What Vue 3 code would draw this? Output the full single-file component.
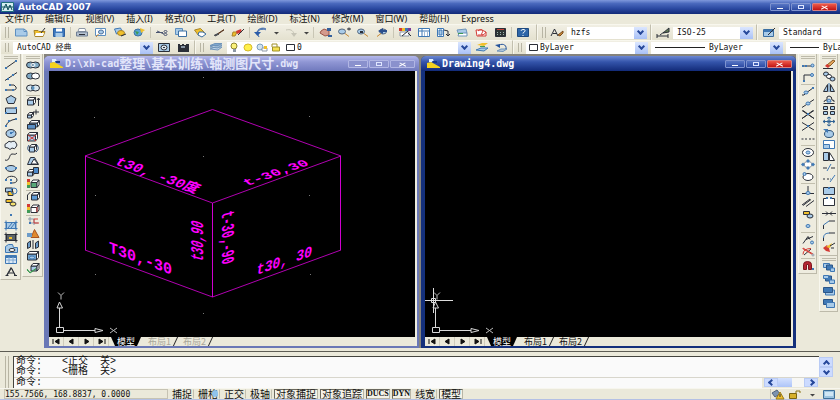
<script setup>
import { h } from 'vue'

const K = '#2b2f38'
const B = '#3f78b4'
const L = '#a9cbe8'
const W = '#ffffff'
const Y = '#f0c02c'
const R = '#d23a34'
const G = '#3f9a55'
const S = '#8d98a6'
const O = '#c98a35'
const N = 'none'

const box = (x, y, w, hh) => `M${x} ${y}h${w}v${hh}h${-w}z`
const oval = (x, y, rx, ry) => `M${x - rx} ${y}a${rx} ${ry} 0 1 0 ${rx * 2} 0a${rx} ${ry} 0 1 0 ${-rx * 2} 0z`
const dots = (...p) => [B, N, p.map(([x, y]) => box(x - 1, y - 1, 2, 2)).join('')]
const cube = (x, y, w, d, fill = L) => [
  [fill, K, `M${x} ${y + 3}h${w}v${d}h${-w}z`],
  [W, K, `M${x} ${y + 3}l2 -2.5h${w}l-2 2.5zM${x + w} ${y + 3}l2 -2.5v${d}l-2 2.5z`]
]

// Each icon is a list of [fill, stroke, path] on a 14 x 11 grid
const icons = {
  new: [[L, '#5d8fc0', 'M1.5 2h8.500l3 2.500v4.500h-11.500z'], [W, '#5d8fc0', 'M10 2l3 2.500h-3z']],
  open: [[Y, '#a8842a', 'M1 3.500h4l1 1h6l-2 5h-8z'], [W, N, 'M3 6h8l-1 3h-8z'], [N, K, 'M8 6l4 -5']],
  save: [['#3d78bd', '#2d5f9f', box(1.5, 1.5, 11, 8)], [W, N, box(4, 1.5, 6, 3)], [L, N, box(3.5, 6, 7, 4)]],
  print: [[W, S, 'M4 1.500h6l1 3h-8z'], ['#b6c2d0', '#6f7f94', 'M1.500 5h11v4h-11z'], [K, N, box(4, 7, 6, 1)]],
  preview: [[W, '#5d8fc0', 'M1.500 1.500h10v7h-10z'], [L, '#4a6f9c', oval(7, 5, 2.5, 2)], [N, O, 'M4.500 7l-2.500 3']],
  publish: [[L, B, 'M1.500 2l6 -1 2 4 -6 2z'], [Y, '#a8842a', oval(8, 6, 3.5, 2.5)], [N, K, 'M8 9l5 -2']],
  dwf: [['#57a3d8', '#3b6fa2', oval(6, 5.5, 4, 3.5)], [Y, N, 'M8 1l5 2 -4 3z'], [G, N, 'M3 4l4 1 -2 3z']],
  cut: [[N, '#4b5570', 'M1 5.500h7M2 4l7 3M9 4.500a1.500 1 0 1 1 3 0a1.500 1 0 1 1 -3 0M9 7.500a1.500 1 0 1 1 3 0a1.500 1 0 1 1 -3 0']],
  copy: [[L, '#5d8fc0', box(1.5, 1.5, 7, 6)], [W, '#3b6fa2', box(4.5, 4, 8, 5.5)]],
  paste: [[Y, '#a8842a', 'M1.500 3l6 -1.500 4 4 -6 3z'], [W, '#3b6fa2', 'M6 5h4l3 2 -4 3 -4 -2z']],
  match: [[N, K, 'M2 8.500l4 -2M3 9l4 -2'], [N, '#5b3922', 'M6 6.500l6 -4M6 7l6 -4']],
  block: [[Y, '#a8842a', 'M2 5h4l-2 4h-3z'], [R, N, 'M5 4l5 -2 1 3 -5 2z'], [N, K, 'M7 8l6 -6']],
  undo: [[N, '#2a5ba8', 'M3 6c2 -5 8 -4 9 -3M3 5c2 -5 8 -4 9 -3M3 6c1 1 1 2 2 4'], ['#2a5ba8', N, 'M0 5h7l-3.500 4z']],
  redo: [[N, '#c6c4b6', 'M2 3c4 -1 7 0 8 4'], ['#c6c4b6', N, 'M7 6h6l-3 4z']],
  caret: [['#444444', N, 'M5 5h5l-2.500 2.500z']],
  pan: [['#d59a8d', '#9a5548', 'M3 4l3 -2 5 2v4l-4 1 -5 -3z'], ['#35609c', N, 'M9 1h4v3h-4zM10 8h4v2h-4z']],
  zoomrt: [[L, '#54677e', oval(5, 4.5, 3.5, 2.5)], [N, O, 'M8 6.500l4 3'], [N, K, 'M10 2h4M12 0.500v3']],
  zoomwin: [[L, '#54677e', oval(5, 4.5, 3.5, 2.5)], [N, O, 'M8 6.500l4 3'], [K, N, box(4, 4, 3, 2)]],
  zoomprev: [[L, '#54677e', oval(8, 4.5, 3.5, 2.5)], [N, O, 'M6 6.500l-4 3'], ['#2a4e8c', N, 'M3 4l5 -3v2h4v2h-4v2z']],
  props: [[R, N, box(1, 1, 3, 3)], [Y, N, box(4, 1, 3, 3)], [B, N, box(7, 1, 3, 3)], ['#7a3b9a', N, box(10, 1, 3, 3)], [W, S, 'M2 5h9v4h-9z'], [N, K, 'M4 9l6 -5M10 6l3 3']],
  center: [[W, B, box(1.5, 1.5, 11, 8)], [N, B, 'M5 1v9M1 4h12M7 6h1M10 6h1M7 8h1M10 8h1']],
  palette: [[W, B, 'M1.500 1.500h6v8h-6z'], [L, B, 'M3 3h3v5h-3z'], [N, K, 'M8 3l4 1v5M10 7l2 2 2 -2']],
  sheet: [[L, '#6f94ba', 'M2 3l9 -1 1 4 -8 2z'], [W, '#6f94ba', 'M4 6h8v3h-9z'], [G, N, box(3, 6, 5, 1)]],
  markup: [[W, R, 'M2 3h6l4 2v4h-9z'], [N, R, 'M4 4c3 -3 6 -1 4 2s3 2 4 -1M4 8h5']],
  calc: [['#2c3433', K, box(2.5, 1.5, 10, 8)], ['#c4413b', N, box(4, 2, 7, 1)], [N, '#9db2ae', 'M4 5.500h1M7 5.500h1M10 5.500h1M4 7.500h1M7 7.500h1M10 7.500h1']],
  help: [['#2f66a8', '#1f4a80', box(1.5, 1.5, 11, 8)], [N, W, 'M5 4c0 -2 5 -2 4 0c0 1 -2 1 -2 2.500M7 8v1']],
  style: [[N, K, 'M1 9l3.500 -7 3.500 7M3 6.500h4'], [O, '#7a4a1f', 'M8 8l5 -4v2l-3 3z']],
  dim: [[N, K, 'M1 9h11M1 7v4M12 7v4M4 8l4 -3'], ['#5f7a55', K, 'M7 6l6 -5v4z']],
  tbl: [[L, '#3b6fa2', box(1.5, 2.5, 10, 7)], [B, N, box(2, 3, 9, 2)], [N, K, 'M6 8l7 -7']],
  gear: [[L, K, box(1.5, 1.5, 11, 8)], ['#dde6ee', K, oval(7, 5.5, 3, 2.5)], [K, N, box(6, 5, 2, 1)]],
  space: [[K, N, 'M2 2h2v1h2v-1h2v1h2v-1h3v8h-11z'], ['#8896a6', N, box(5, 4, 4, 2)]],
  layers: [['#c3d7ea', '#6f94ba', 'M1 7l5 -2h7l-4 3zM1 5l5 -2h7l-4 3z'], ['#7da7d0', '#6f94ba', 'M1 3.500l5 -2h7l-4 2z']],
  layercur: [[Y, N, 'M2 3l5 -2h6l-4 3z'], [L, B, 'M1 8l5 -2h7l-4 3z'], [G, N, box(5, 4, 5, 1)]],
  layerprev: [['#b5c9de', '#6f94ba', 'M3 9l4 -2h6l-4 2.500z'], [N, '#23529b', 'M12 7c1 -5 -5 -6 -8 -3'], ['#23529b', N, 'M1 3l5 -1v4z']],
  bulb: [['#fbf27a', '#8d8430', oval(7, 4, 3, 3)], [S, N, box(6, 7, 3, 3)]],
  sun: [['#fff04a', '#d6b928', oval(7, 5.5, 4, 3.5)]],
  freeze: [['#cfe1ef', '#7ba0c0', oval(5, 5, 3, 3)], [W, S, 'M7 6h5v3h-5z'], [Y, N, box(9, 4, 3, 3)]],
  lock: [[N, '#a0912b', 'M3 5v-3h5v3'], ['#f4e153', '#a0912b', box(3.5, 5, 7, 4)]],
  swatch: [[W, K, box(3.5, 2.5, 8, 6)]],

  line: [[N, K, 'M2 9L12 2'], dots([2, 9], [12, 2])],
  xline: [[N, K, 'M1 9.500L13 1.500'], dots([4, 8], [9, 4])],
  pline: [[N, K, 'M2 8h7q4 0 3 -3t-6 -2'], dots([2, 8], [6, 3], [9, 8])],
  polygon: [[L, K, 'M7 1.500l5 3 -2 5h-6l-2 -5z']],
  rect: [[L, K, box(1.5, 3, 11, 5.5)], dots([12, 3], [2, 8])],
  arc: [[N, K, 'M2 9.500q1 -6 10 -7.500'], dots([2, 9], [5, 4], [12, 2])],
  circle: [[L, K, oval(7, 5.5, 5, 4)], [N, B, 'M7 5.500l3 -2'], dots([7, 5])],
  cloud: [['#e3edf5', K, 'M3 3q2 -3 4 -1q4 -2 5 1q2 2 0 4q-1 3 -4 1q-2 3 -4 0q-4 0 -3 -2q-1 -2 2 -3z']],
  spline: [[N, K, 'M1 9c5 2 4 -6 7 -6s3 1 5 -1']],
  ellipse: [[L, K, oval(7, 5.5, 5, 3)], dots([2, 5], [12, 5])],
  earc: [[N, K, 'M2 6c0 -5 11 -5 11 0c0 3 -4 3 -6 3'], dots([2, 6], [7, 9], [7, 6])],
  insert: [[L, K, 'M1.500 2h7v4h-7z'], [Y, K, 'M4 5.500h5v4h-5z'], [N, B, oval(10, 5, 3, 3)]],
  mkblock: [[Y, K, 'M2 2.500h6v3h-6z'], ['#f3e06e', K, oval(9, 7, 3, 2)]],
  point: [dots([7, 6])],
  hatch: [[L, B, box(2.5, 2.5, 9, 6)], [N, B, 'M2 0.500v10M12 0.500v10M0.500 2.500h13M0.500 8.500h13M4 8l4 -5M7 8l4 -5']],
  gradient: [['#5d6468', K, box(2.5, 2.5, 9, 6)], [N, K, 'M2 0.500v10M12 0.500v10M0.500 2.500h13M0.500 8.500h13'], [Y, N, box(5, 5, 3, 2)]],
  region: [[L, B, 'M1.500 9.500v-6l3 -2h4l1 3h4v5z'], [W, K, oval(8, 7, 3, 1.5)]],
  table: [['#dce9f6', B, box(1.5, 1.5, 11, 8)], [B, N, box(2, 2, 10, 2)], [N, '#7ea8d2', 'M2 6h10M5 3v6M9 3v6']],
  text: [[N, K, 'M2.500 9.500L7 1.500L11.500 9.500M4.500 7h5M1.500 9.500h3M10 9.500h3'], [N, K, 'M3 9.500L7.500 2L11 9.500']],

  union: [['#7fa9c4', K, oval(4.500, 5, 4, 3)], ['#7fa9c4', K, oval(9.500, 5, 4, 3)], [N, W, oval(7, 5, 2, 1.5)]],
  subtract: [['#7fa9c4', K, oval(4.500, 5, 4, 3)], [W, K, oval(9.500, 5, 4, 3)]],
  intersect: [['#dce9f0', K, oval(4.500, 5, 4, 3)], ['#dce9f0', K, oval(9.500, 5, 4, 3)], ['#5b93bd', N, oval(7, 5, 1.5, 2)]],
  extrude: [...cube(1.5, 1, 6, 5), [N, K, 'M12.500 10v-8M11 4l1.500 -2 1.500 2']],
  move3: [...cube(1.5, 4, 4, 3), [N, K, 'M7 4h6M10 1.500v5']],
  offset3: [...cube(3.5, 0, 8, 4, '#7fb0dd'), ['#5b8fc4', K, box(1.500, 4.5, 8, 4.5)]],
  delface: [...cube(1.5, 1, 8, 6), [N, R, 'M2 4l8 6M10 4l-8 6']],
  rotface: [...cube(3.5, 1, 5, 5), [N, '#31527f', 'M3 2q-3 4 1 7M11 2q3 4 -1 7']],
  taper: [[L, K, 'M1.500 9.500l3 -7h4l4 7z'], [W, K, 'M5 9l3 -5 4 5z']],
  copyface: [...cube(1.5, 3, 5, 4), ['#4f8bc9', K, box(7.5, 1.500, 5, 6)]],
  colface: [[R, N, box(1, 1, 3, 3)], [Y, N, box(1, 4, 3, 3)], [G, N, box(1, 7, 3, 3)], ...cube(5, 1.5, 6, 5, '#57a878')],
  copyedge: [...cube(5.5, 1, 6, 5, '#5f9bd4'), [N, K, 'M1.500 9v-5l3 -3']],
  coledge: [[R, N, box(1, 1, 3, 3)], [Y, N, box(1, 4, 3, 3)], [G, N, box(1, 7, 3, 3)], ...cube(5, 1.5, 6, 5, W), [N, R, 'M11 4v5']],
  imprint: [[N, S, 'M2 3h6v6M4 1v6h8'], [N, R, 'M12 3h-4v4h5'], dots([4, 7])],
  clean: [['#e08a2e', '#a8541f', 'M5 9.500l3.500 -8 4.500 8z'], ['#6d9cc9', N, box(1, 5, 5, 4)]],
  separate: [['#6d9cc9', K, 'M1.500 4l3 -2v6l-3 1.500z'], ['#6d9cc9', K, 'M9.500 4l3 -2v6l-3 1.500z'], [N, K, 'M7 1v9']],
  shell: [...cube(1.5, 0, 9, 6, '#6fa3cf'), [L, B, oval(6, 6.5, 2.5, 1.5)]],
  check: [...cube(5, 0, 6, 5), [N, G, 'M1 6l3 3.500 6 -4'], [N, G, 'M1 7l3 3 6 -4']],

  temp: [[N, K, 'M1 6h10'], dots([2, 6], [5, 6], [12, 6]), [L, B, oval(11.5, 5.5, 1.5, 1.5)]],
  from: [[N, K, 'M3 9v-6h9'], dots([3, 9]), [L, B, oval(11, 3, 1.5, 1.5)]],
  endp: [[N, K, 'M1 9q2 1 4 -2l7 -5'], [L, B, oval(5, 6.5, 2, 1.5)], dots([12, 2])],
  midp: [[N, K, 'M1 9.500L13 1.500'], [L, B, oval(7, 5.5, 2, 1.5)]],
  inter: [[N, K, 'M1 1.500l12 8M13 1.500l-12 8M2 1.500l11 8M12 1.500l-11 8'], dots([7, 5])],
  appint: [[N, K, 'M1 1.500l5 3M13 1.500l-12 8M8 6l5 3'], dots([7, 5])],
  ext: [[N, K, 'M0.500 6h2M4 6h2M8 6h2M11.500 6h2']],
  cen: [[W, K, oval(7, 5.5, 5.5, 4)], [L, B, oval(7, 5.5, 2, 1.5)]],
  quad: [[W, S, oval(7, 5.5, 4, 3)], [B, N, 'M7 0l2 2 -2 2 -2 -2zM7 7l2 2 -2 2 -2 -2zM2 3.500l2 2 -2 2 -2 -2zM12 3.500l2 2 -2 2 -2 -2z']],
  tan: [[W, K, oval(7, 6, 5, 3.5)], [L, B, oval(3.5, 3, 1.5, 1.5)]],
  perp: [[N, K, 'M1 8.500h12M7 1v7'], [L, B, oval(7, 8, 2, 1.5)]],
  para: [[N, K, 'M1 8l8 -6M5 9.500l8 -6M2 8.500l8 -6']],
  insp: [[Y, K, box(2.5, 2.5, 6, 3)], [L, K, oval(9, 7, 3, 2)]],
  node: [[L, B, oval(7, 6, 2, 1.5)]],
  near: [[N, K, 'M2 9.500l5 -7 2 3M5 5.500l7 -3'], [L, B, oval(11, 8.5, 1.5, 1.5)]],
  nosnap: [[N, K, 'M3 9l7 -6'], [N, R, 'M1.500 2.500l10 6M2 2l10 6M2 8.500q0 -6 8 -6'], [W, S, oval(12, 9, 1, 1)]],
  osnap: [['#b52430', '#7d1620', 'M2.500 9.500v-5q0 -3 4 -3t4 3v5h-3v-5h-2v5z'], dots([12, 9])],

  erase: [['#e2a45a', '#8a5a26', 'M5 6l6 -5 2 1 -5 5z'], [R, N, 'M3 7l2 -2 3 2 -2 2z'], [N, K, 'M1 9.500h10']],
  copy2: [[L, K, oval(4, 3, 2.5, 2)], [W, K, oval(7, 5.500, 2.5, 2)], [L, K, oval(10.500, 8, 2.5, 2)]],
  mirror: [[L, K, 'M1.500 9.500l4 -7v7zM12.500 9.500l-4 -7v7z'], [N, B, 'M7 1v9']],
  offset: [[N, K, 'M1.500 9.500h11M2 8q0 -2 3 -2q-1 -4 2 -4t3 4q3 0 2 2'], [L, B, 'M5 8q0 -3 2 -3t2 3z']],
  array: [[L, K, box(1.5, 1.5, 4, 3) + box(8.5, 1.5, 4, 3) + box(1.5, 6.5, 4, 3) + box(8.5, 6.5, 4, 3)]],
  move: [[N, '#2f6294', 'M1 5.500h12M7 1v9M3 4l-2 1.500 2 1.500M11 4l2 1.500 -2 1.500M5 2.500l2 -1.500 2 1.500M5 8.500l2 1.500 2 -1.500'], ['#2f6294', N, box(5, 4.5, 4, 2)]],
  rotate: [[L, '#2f5478', oval(7, 6, 4.5, 3.5)], [B, N, 'M1 1h5v4z']],
  scale: [[W, B, box(1.5, 1.5, 11, 8)], [L, B, box(1.5, 5.5, 6, 4)]],
  stretch: [[L, K, 'M1.500 1.500h5v8h-5z'], [W, K, 'M7.500 9.500v-8l5 8z']],
  trim: [[N, K, 'M1 6h4M9 6h4'], [N, B, 'M5 9l4 -7']],
  extend: [[N, K, 'M1 6h2M5 6h2'], [N, B, 'M8 6h1M8 9l5 -7']],
  breakpt: [[L, K, box(1.5, 2.5, 11, 7)], dots([7, 3])],
  brk: [[W, K, 'M5 2.500h-3.500v7h11v-7h-3.500'], dots([5, 2], [9, 2])],
  join: [[N, K, 'M0 5.500h14M4 3.500l2 2 -2 2M10 3.500l-2 2 2 2']],
  chamfer: [[N, K, 'M1.500 10v-4M7 2h6'], [N, B, 'M1.500 6l5.500 -4']],
  fillet: [[N, K, 'M1.500 10v-4M7 2h6'], [N, B, 'M1.500 7q0 -5 6 -5']],
  explode: [[R, N, 'M1 6l4 -3 2 3 1 4 -4 -1z'], [Y, N, 'M4 5l6 -4 -2 5z'], [N, K, 'M8 4l5 -3M9 6h3']],
  front: [[L, B, box(1.5, 1.5, 6, 4)], ['#3f78b4', '#2c5688', box(4.5, 3, 6, 5)], [L, B, box(8.5, 6, 4, 3.5)]],
  back: [['#3f78b4', '#2c5688', box(3.5, 2, 6, 5)], [L, B, box(1.5, 1.5, 5, 3) + box(7.5, 6, 5, 3.5)]],
  above: [[L, B, box(3.5, 4, 9, 5)], ['#3f78b4', '#2c5688', box(1.5, 1.5, 9, 5)]],
  under: [['#3f78b4', '#2c5688', box(1.5, 1.5, 9, 5)], [L, B, box(4.5, 4.5, 8, 5)]],

  app: [['#d5eef0', '#1f6f7c', box(0.500, 0.500, 12, 9)], [N, '#12505c', 'M2 8l3 -6 2 6 2 -5 2 5M1 5h11']],
  doc: [['#f4d21e', N, 'M1 10v-5l4 -1 9 5v1z'], ['#dff0ff', N, 'M3 1h4l1 3h-5z'], ['#173a8a', N, 'M6 3h5v2h-4z']],
  warn: [['#7c93b0', '#51637c', 'M1 4l5 -3 3 4 -5 3z'], [Y, '#9a7a14', 'M5 10l4 -7 4 7z'], [K, N, box(8.5, 5, 1, 3)]],
  unlock: [[N, '#8c7414', 'M8 4v-2h4v2'], ['#d6b02a', '#7a6410', box(1.5, 4.5, 7, 5)]],
  screen: [['#9cc4e0', '#3c6f9a', box(1.5, 1.5, 11, 8)], ['#cfe6f5', N, box(3, 3, 8, 4)]]
}

const Glyph = (props) =>
  h('svg', { class: 'glyph', viewBox: '0 0 14 11', width: 14, height: 11, 'aria-hidden': 'true' },
    (icons[props.name] || []).map(([fill, stroke, d]) => h('path', { fill, stroke, d })))
Glyph.props = ['name']

const menus = ['文件(F)', '编辑(E)', '视图(V)', '插入(I)', '格式(O)', '工具(T)', '绘图(D)', '标注(N)', '修改(M)', '窗口(W)', '帮助(H)', 'Express']

const standard = [
  ['new', 'open', 'save'],
  ['print', 'preview', 'publish', 'dwf'],
  ['cut', 'copy', 'paste', 'match', 'block'],
  ['undo', 'caret', 'redo', 'caret'],
  ['pan', 'zoomrt', 'zoomwin', 'zoomprev'],
  ['props', 'center', 'palette', 'sheet', 'markup', 'calc'],
  ['help']
]

const draw = [['line', 'xline', 'pline', 'polygon', 'rect', 'arc', 'circle', 'cloud', 'spline', 'ellipse', 'earc', 'insert', 'mkblock', 'point', 'hatch', 'gradient', 'region', 'table', 'text']]
const solids = [
  ['union', 'subtract', 'intersect'],
  ['extrude', 'move3', 'offset3', 'delface', 'rotface', 'taper', 'copyface', 'colface'],
  ['copyedge', 'coledge'],
  ['imprint', 'clean', 'separate', 'shell', 'check']
]
const snaps = [
  ['temp', 'from'],
  ['endp', 'midp', 'inter', 'appint', 'ext'],
  ['cen', 'quad', 'tan'],
  ['perp', 'para', 'insp', 'node'],
  ['near', 'nosnap'],
  ['osnap']
]
const modify = [['erase', 'copy2', 'mirror', 'offset', 'array', 'move', 'rotate', 'scale', 'stretch', 'trim', 'extend', 'breakpt', 'brk', 'join', 'chamfer', 'fillet', 'explode']]
const order = [['front', 'back', 'above', 'under']]

const leftBars = [
  [{ id: 'draw', groups: draw }],
  [{ id: 'solids', groups: solids }]
]
const rightBars = [
  [{ id: 'snaps', groups: snaps }],
  [{ id: 'modify', groups: modify }, { id: 'order', groups: order }]
]

const docs = [
  { id: 'iso', active: false, title: ['D:\\xh-cad', '整理', '\\', '基本训练', '\\', '轴测图尺寸', '.dwg'] },
  { id: 'blank', active: true, title: ['Drawing4.dwg'] }
]
const isCjk = (s) => /[\u4e00-\u9fff]/.test(s)

const gridDots = [[154, 6], [45, 46], [260, 45], [154, 85], [46, 124], [260, 124], [46, 203], [261, 203], [154, 242]]

const labels = [
  { text: 't30, -30度', m: 'matrix(0.94 0.34 -0.6 0.74 65 93)' },
  { text: 't-30,30', m: 'matrix(1 -0.34 0.58 0.56 198 115)' },
  { text: 't30,90', m: 'matrix(0 -0.73 1.2 0.36 154 191)' },
  { text: 't-30,-90', m: 'matrix(0 0.73 -1.2 0.36 173 142)' },
  { text: 'T30,-30', m: 'matrix(1 0.36 0 1.05 60 181)' },
  { text: 't30, 30', m: 'matrix(0.88 -0.3 -0.15 1.05 207 204)' }
]

const navs = [
  { id: 'first', d: 'M4 2v5M10 2v5l-4 -2.500z' },
  { id: 'prev', d: 'M9 2v5l-4 -2.500z' },
  { id: 'next', d: 'M6 2v5l4 -2.500z' },
  { id: 'last', d: 'M5 2v5l4 -2.500zM11 2v5' }
]

const modes = [
  { label: '捕捉' }, { label: '栅格', busy: true }, { label: '正交' }, { label: '极轴' },
  { label: '对象捕捉', on: true }, { label: '对象追踪', on: true },
  { label: 'DUCS', on: true, latin: true }, { label: 'DYN', on: true, latin: true },
  { label: '线宽' }, { label: '模型', on: true }
]
</script>

<template>
  <div class="app">
    <header class="titlebar">
      <Glyph name="app" />
      <h1>AutoCAD 2007</h1>
      <div class="wincontrols main-controls">
        <button class="min" aria-label="最小化"></button>
        <button class="max" aria-label="还原"></button>
        <button class="close" aria-label="关闭"></button>
      </div>
    </header>

    <nav class="menubar">
      <a v-for="m in menus" :key="m" href="#">{{ m }}</a>
    </nav>

    <div class="toolrow">
      <section class="bar standard">
        <i class="grip"></i>
        <div v-for="(g, i) in standard" :key="i" class="group">
          <button v-for="(n, j) in g" :key="j" class="tool" :class="{ narrow: n === 'caret' }" :aria-label="n"><Glyph :name="n" /></button>
        </div>
      </section>
      <section class="bar">
        <i class="grip"></i>
        <button class="tool" aria-label="文字样式"><Glyph name="style" /></button>
        <label class="combo style-combo"><select aria-label="文字样式"><option>hzfs</option></select><i class="arrow"></i></label>
      </section>
      <section class="bar">
        <button class="tool" aria-label="标注样式"><Glyph name="dim" /></button>
        <label class="combo style-combo"><select aria-label="标注样式"><option>ISO-25</option></select><i class="arrow"></i></label>
      </section>
      <section class="bar">
        <button class="tool" aria-label="表格样式"><Glyph name="tbl" /></button>
        <label class="combo style-combo"><select aria-label="表格样式"><option>Standard</option></select><i class="arrow"></i></label>
      </section>
    </div>

    <div class="toolrow second">
      <section class="bar">
        <i class="grip"></i>
        <label class="combo workspace"><select aria-label="工作空间"><option>AutoCAD 经典</option></select><i class="arrow"></i></label>
        <button class="tool" aria-label="工作空间设置"><Glyph name="gear" /></button>
        <button class="tool" aria-label="我的工作空间"><Glyph name="space" /></button>
      </section>
      <section class="bar">
        <i class="grip"></i>
        <button class="tool" aria-label="图层"><Glyph name="layers" /></button>
        <label class="combo layer">
          <Glyph name="bulb" /><Glyph name="sun" /><Glyph name="freeze" /><Glyph name="lock" /><Glyph name="swatch" />
          <select aria-label="当前图层"><option>0</option></select><i class="arrow"></i>
        </label>
        <button class="tool" aria-label="置为当前"><Glyph name="layercur" /></button>
        <button class="tool" aria-label="上一个图层"><Glyph name="layerprev" /></button>
      </section>
      <section class="bar">
        <i class="grip"></i>
        <label class="combo color"><Glyph name="swatch" /><select aria-label="颜色"><option>ByLayer</option></select><i class="arrow"></i></label>
        <label class="combo ltype"><i class="sample"></i><select aria-label="线型"><option>ByLayer</option></select><i class="arrow"></i></label>
        <label class="combo weight"><i class="sample short"></i><select aria-label="线宽"><option>ByLayer</option></select><i class="arrow"></i></label>
      </section>
    </div>

    <main class="work">
      <div class="dock">
        <div v-for="(col, i) in leftBars" :key="i" class="dockcol">
          <section v-for="b in col" :key="b.id" class="vbar" :class="b.id">
            <i class="hgrip"></i>
            <template v-for="(g, j) in b.groups" :key="j">
              <i v-if="j" class="rule"></i>
              <button v-for="n in g" :key="n" class="tool" :aria-label="n"><Glyph :name="n" /></button>
            </template>
          </section>
        </div>
      </div>

      <div class="mdi">
        <article v-for="d in docs" :key="d.id" class="doc" :class="{ active: d.active }">
          <header class="doctitle">
            <Glyph name="doc" />
            <h2><span v-for="(t, i) in d.title" :key="i" :class="{ cjk: isCjk(t) }">{{ t }}</span></h2>
            <div class="wincontrols">
              <button class="min" aria-label="最小化"></button>
              <button class="max" aria-label="最大化"></button>
              <button class="close" aria-label="关闭"></button>
            </div>
          </header>
          <div class="client">
            <svg class="canvas" width="100%" height="100%">
              <g v-if="d.id === 'iso'">
                <rect v-for="(p, i) in gridDots" :key="i" :x="p[0]" :y="p[1]" width="1" height="1" fill="#777777" />
                <g fill="none" stroke="#b000b0">
                  <path d="M36 85L163.500 38.500L292 85L163.500 132z" />
                  <path d="M36 179L163.500 226L292 179" />
                  <path d="M36.500 85V179M163.500 132V226M291.500 85V179" stroke="#d000d0" />
                </g>
                <text v-for="l in labels" :key="l.text" class="note" :transform="l.m">{{ l.text }}</text>
              </g>
              <g class="ucs" fill="none" stroke="#d8d8d8">
                <path d="M7.500 256.500h7v5h-7zM10.500 256V237M8 237l2.500 -6 3 6zM15 259.500H46M46 257.500v4l8 -2z" />
                <path d="M9 221.500l3 3 3 -3M12 224.500v4M61 257l7 5M68 257l-7 5" stroke="#bbbbbb" />
              </g>
              <path v-if="d.active" d="M8.500 217V242M0 229.500H28M6.500 227.500h4v4h-4z" fill="none" stroke="#dddddd" />
            </svg>
            <div class="tabs">
              <button v-for="n in navs" :key="n.id" class="nav" :aria-label="n.id">
                <svg width="15" height="9" viewBox="0 0 15 9"><path :d="n.d" fill="#111111" stroke="#111111" /></svg>
              </button>
              <button class="tab current">模型</button>
              <button class="tab">布局1</button>
              <button class="tab">布局2</button>
            </div>
          </div>
        </article>
      </div>

      <div class="dock right">
        <div v-for="(col, i) in rightBars" :key="i" class="dockcol">
          <section v-for="b in col" :key="b.id" class="vbar" :class="b.id">
            <i class="hgrip"></i>
            <template v-for="(g, j) in b.groups" :key="j">
              <i v-if="j" class="rule"></i>
              <button v-for="n in g" :key="n" class="tool" :aria-label="n"><Glyph :name="n" /></button>
            </template>
          </section>
        </div>
      </div>
    </main>

    <section class="command">
      <i class="grip"></i>
      <div class="console">
        <div class="log">
          <p><span>命令:</span><span>&lt;正交&nbsp; 关&gt;</span></p>
          <p><span>命令:</span><span>&lt;栅格&nbsp; 关&gt;</span></p>
        </div>
        <div class="prompt">
          <label for="cmd">命令:</label>
          <input id="cmd" type="text" />
          <div class="hscroll">
            <button class="scroll west" aria-label="向左"></button>
            <i class="thumb"></i>
            <i class="track"></i>
            <button class="scroll east" aria-label="向右"></button>
          </div>
        </div>
      </div>
      <div class="vscroll">
        <button class="scroll north" aria-label="向上"></button>
        <button class="scroll south" aria-label="向下"></button>
      </div>
    </section>

    <footer class="status">
      <output class="coords">155.7566, 168.8837, 0.0000</output>
      <button v-for="m in modes" :key="m.label" class="mode" :class="{ on: m.on, latin: m.latin }">{{ m.label }}<i v-if="m.busy" class="busy"></i></button>
      <div class="tray">
        <Glyph name="warn" /><Glyph name="unlock" /><Glyph name="caret" />
      </div>
      <button class="tool" aria-label="全屏显示"><Glyph name="screen" /></button>
    </footer>
  </div>
</template>

<style>
body {
  margin: 0;
  background: #ebe9da;
}
</style>

<style scoped>
.app {
  display: flex;
  flex-direction: column;
  min-height: 100vh;
  overflow: hidden;
  background: #ebe9da;
  color: #111111;
  font-family: "Liberation Sans", "Noto Sans CJK SC", sans-serif;
  font-size: 9px;
  line-height: 9px;
}
.app *,
.app *::before,
.app *::after {
  box-sizing: border-box;
}
button,
select,
input {
  margin: 0;
  padding: 0;
  border: 0;
  border-radius: 0;
  background: none;
  color: inherit;
  font: inherit;
}
h1,
h2,
p {
  margin: 0;
}
.app :deep(.glyph) {
  display: block;
  flex: none;
}

.titlebar {
  display: flex;
  align-items: center;
  gap: 3px;
  height: 14px;
  padding: 0 3px 0 1px;
  background: linear-gradient(#7f98dc, #4a69bd 25%, #2c4aa2 60%, #122a78);
}
.titlebar h1 {
  flex: 1;
  color: #ffffff;
  font: bold 9px/12px "DejaVu Sans", sans-serif;
}
.wincontrols {
  display: flex;
  gap: 1px;
}
.wincontrols button {
  position: relative;
  width: 20px;
  height: 8px;
  border: 1px solid #7e93d0;
  border-radius: 1px;
  background: linear-gradient(#5876c4, #2d4ba4);
}
.wincontrols .close {
  width: 25px;
  border-color: #d98080;
  background: linear-gradient(#ee5a4a, #c01414);
}
.wincontrols .min::before {
  content: "";
  position: absolute;
  inset: 4px 6px 1px;
  background: #ffffff;
}
.wincontrols .max::before {
  content: "";
  position: absolute;
  inset: 1px 6px;
  border: 1px solid #dfe6ff;
}
.wincontrols .close::before,
.wincontrols .close::after {
  content: "";
  position: absolute;
  inset: 2px 8px;
  border-top: 1px solid #ffffff;
  transform: translateY(1px) rotate(28deg);
}
.wincontrols .close::after {
  transform: translateY(1px) rotate(-28deg);
}

.menubar {
  display: flex;
  align-items: center;
  gap: 12px;
  height: 10px;
  padding: 0 5px;
}
.menubar a {
  color: #111111;
  text-decoration: none;
  white-space: nowrap;
  font: 9px/10px "Noto Sans", "Noto Sans CJK SC", sans-serif;
}

.toolrow {
  display: flex;
  height: 16px;
  overflow: hidden;
}
.toolrow.second {
  height: 14px;
}
.bar {
  display: flex;
  flex: none;
  align-items: center;
  gap: 2px;
  padding: 0 3px;
  border-top: 1px solid #f8f7ee;
  border-right: 1px solid #c2bfae;
  border-left: 1px solid #f8f7ee;
  background: linear-gradient(#f1efe4, #e4e1cf);
}
.bar.standard,
.second .bar {
  gap: 3px;
}
.bar.standard {
  padding-right: 5px;
}
.grip {
  flex: none;
  align-self: stretch;
  width: 4px;
  margin: 2px 1px;
  border-right: 1px solid #b8b5a4;
  border-left: 1px solid #b8b5a4;
}
.group {
  display: flex;
  align-items: center;
  gap: 3px;
}
.group + .group {
  padding-left: 3px;
  border-left: 1px solid #c9c6b5;
}
.tool {
  display: flex;
  flex: none;
  align-items: center;
  justify-content: center;
  width: 16px;
  height: 11px;
}
.tool.narrow {
  width: 8px;
}

.combo {
  position: relative;
  display: flex;
  flex: none;
  align-items: center;
  height: 12px;
  padding-right: 13px;
  background: #ffffff;
}
.combo select {
  flex: 1;
  min-width: 0;
  height: 12px;
  padding-left: 4px;
  appearance: none;
  outline: 0;
  font: 8px/12px "DejaVu Sans Mono", "Noto Sans CJK SC", monospace;
}
.arrow {
  position: absolute;
  top: 0;
  right: 0;
  display: grid;
  place-items: center;
  width: 13px;
  height: 12px;
  background: linear-gradient(#dbe6ff, #a9c1f6);
  pointer-events: none;
}
.arrow::before {
  content: "";
  width: 5px;
  height: 5px;
  border: solid #26489a;
  border-width: 0 2px 2px 0;
  transform: translateY(-1px) rotate(45deg);
}
.style-combo {
  width: 80px;
}
.workspace {
  width: 140px;
}
.layer {
  width: 244px;
}
.layer select,
.color select {
  padding-left: 0;
}
.color {
  width: 122px;
}
.ltype,
.weight {
  width: 132px;
}
.sample {
  width: 50px;
  margin-left: 4px;
  border-top: 1px solid #222222;
}
.sample.short {
  width: 29px;
}

.work {
  display: flex;
  flex: 1;
  min-height: 297px;
}
.dock {
  display: flex;
  flex: none;
  gap: 1px;
  width: 44px;
  padding-right: 1px;
}
.dock.right {
  gap: 2px;
  padding: 0 2px;
}
.dockcol {
  flex: 1;
}
.vbar {
  display: flex;
  flex-direction: column;
  align-items: center;
  justify-content: space-between;
  height: 226px;
  padding: 2px 0;
  border-right: 1px solid #bdbaaa;
  border-bottom: 1px solid #bdbaaa;
  border-left: 1px solid #f8f7ee;
  background: #eeecdf;
}
.vbar.solids {
  height: 223px;
}
.vbar.snaps {
  height: 220px;
}
.vbar.modify {
  height: 202px;
}
.vbar.order {
  height: 56px;
}
.vbar .tool {
  width: 14px;
}
.hgrip {
  flex: none;
  width: 14px;
  height: 3px;
  border-top: 1px solid #bdbaaa;
  border-bottom: 1px solid #bdbaaa;
}
.rule {
  flex: none;
  width: 14px;
  height: 1px;
  background: #c2bfae;
}

.mdi {
  display: grid;
  grid-template-columns: 1fr 1fr;
  gap: 2px;
  flex: 1;
  min-width: 0;
  margin-bottom: 3px;
  padding-top: 2px;
  background: #85837c;
}
.doc {
  display: flex;
  flex-direction: column;
  min-width: 0;
  padding: 0 2px 2px 5px;
  border-radius: 5px 5px 0 0;
  background: #6a78b6;
}
.doc.active {
  padding: 0 3px 2px 4px;
  background: #14307c;
}
.doctitle {
  display: flex;
  align-items: center;
  gap: 2px;
  height: 15px;
  margin: 0 -3px 0 -4px;
  padding: 0 4px 0 5px;
  border-radius: 5px 5px 0 0;
  background: linear-gradient(#b4b8ec, #8f96d4 40%, #7079bd);
}
.active .doctitle {
  background: linear-gradient(#6c88d4, #3454aa 40%, #122a78);
}
.doc:not(.active) .doctitle {
  margin: 0 -2px 0 -5px;
}
.doctitle h2 {
  display: flex;
  flex: 1;
  align-items: center;
  color: #e2e5fa;
  font: bold 10px/14px "DejaVu Sans Mono", "Noto Sans CJK SC", monospace;
  white-space: nowrap;
}
.doctitle h2 .cjk {
  font-size: 13px;
}
.active .doctitle h2 {
  color: #ffffff;
}
.doc:not(.active) .wincontrols button {
  border-color: #b1b6e4;
  background: #8a91cd;
}
.client {
  display: flex;
  flex: 1;
  flex-direction: column;
  border-right: 2px solid #efedde;
  background: #000000;
}
.canvas {
  display: block;
  flex: 1;
  min-height: 266px;
}
.note {
  fill: #ff00ff;
  font: bold 15px "Liberation Mono", "Noto Sans CJK SC", monospace;
}
.tabs {
  display: flex;
  height: 9px;
  background: #ebe9da;
}
.nav {
  width: 15px;
  height: 9px;
  border-right: 1px solid #cfccbc;
}
.nav svg {
  display: block;
}
.tab {
  position: relative;
  height: 9px;
  margin-left: 2px;
  padding: 0 5px;
  font: 9px/9px "Noto Sans CJK SC", sans-serif;
  color: #a9a799;
}
.active .tab {
  color: #111111;
}
.tab::after {
  content: "";
  position: absolute;
  inset: 0 0 0 auto;
  border-right: 1px solid #222222;
  transform: skewX(-25deg);
}
.tab.current,
.active .tab.current {
  padding: 0 6px;
  background: #000000;
  color: #ffffff;
  clip-path: polygon(0 0, 100% 0, calc(100% - 4px) 100%, 4px 100%);
}

.command {
  display: flex;
  height: 37px;
  padding: 4px 7px 0 5px;
  border-top: 1px solid #5d5c54;
}
.command .grip {
  margin: 0 4px 0 0;
}
.console {
  display: flex;
  flex: 1;
  flex-direction: column;
  border-top: 1px solid #44443e;
  border-left: 1px solid #44443e;
  background: #fafafa;
  font: 10px/10px "Liberation Mono", "Noto Sans CJK SC", monospace;
}
.log {
  flex: 1;
  padding-left: 2px;
  border-bottom: 1px solid #d8d6cc;
}
.log p {
  display: grid;
  grid-template-columns: 46px 1fr;
  height: 10px;
}
.prompt {
  display: flex;
  align-items: center;
  height: 10px;
  padding-left: 2px;
}
.prompt input {
  flex: 1;
  height: 10px;
  outline: 0;
}
.hscroll {
  display: flex;
  height: 10px;
  padding: 0 1px 1px 2px;
  background: #ebe9da;
}
.thumb {
  width: 14px;
  background: linear-gradient(#d5e2ff, #adc4f8);
}
.track {
  width: 12px;
  background: #f7f7f4;
}
.vscroll {
  display: flex;
  flex-direction: column;
  padding-top: 1px;
}
.scroll {
  display: grid;
  place-items: center;
  width: 14px;
  height: 9px;
  border: 1px solid #b9cbf5;
  background: #ccdbff;
}
.vscroll .scroll {
  height: 10px;
}
.scroll::before {
  content: "";
  width: 5px;
  height: 5px;
  border: solid #26489a;
  border-width: 2px 0 0 2px;
}
.west::before {
  transform: rotate(-45deg);
}
.north::before {
  transform: translateY(1px) rotate(45deg);
}
.east::before {
  transform: rotate(135deg);
}
.south::before {
  transform: translateY(-1px) rotate(225deg);
}

.status {
  display: flex;
  align-items: center;
  gap: 2px;
  height: 12px;
  padding: 0 3px 0 4px;
  border-top: 1px solid #f7f6ee;
  border-bottom: 1px solid #b4c0e4;
}
.coords {
  width: 164px;
  height: 10px;
  border: 1px solid #c6c3b3;
  font: 8px/9px "DejaVu Sans Mono", monospace;
  white-space: nowrap;
}
.mode {
  position: relative;
  height: 10px;
  padding: 0 1px;
  border: 1px solid transparent;
  border-right-color: #c2bfae;
  font: 10px/8px "Noto Sans CJK SC", sans-serif;
  white-space: nowrap;
}
.mode.on {
  border-color: #6a685e #b8b5a5 #b8b5a5 #6a685e;
  background: #f4f2e8;
}
.mode.latin {
  padding: 0;
  font: bold 8px/8px "Liberation Serif", serif;
}
.busy {
  position: absolute;
  top: 0;
  right: 1px;
  width: 6px;
  height: 7px;
  border-radius: 4px;
  background: #8fc3ec;
}
.tray {
  display: flex;
  gap: 3px;
  margin-left: auto;
  border-left: 1px solid #c6c3b3;
}
</style>
